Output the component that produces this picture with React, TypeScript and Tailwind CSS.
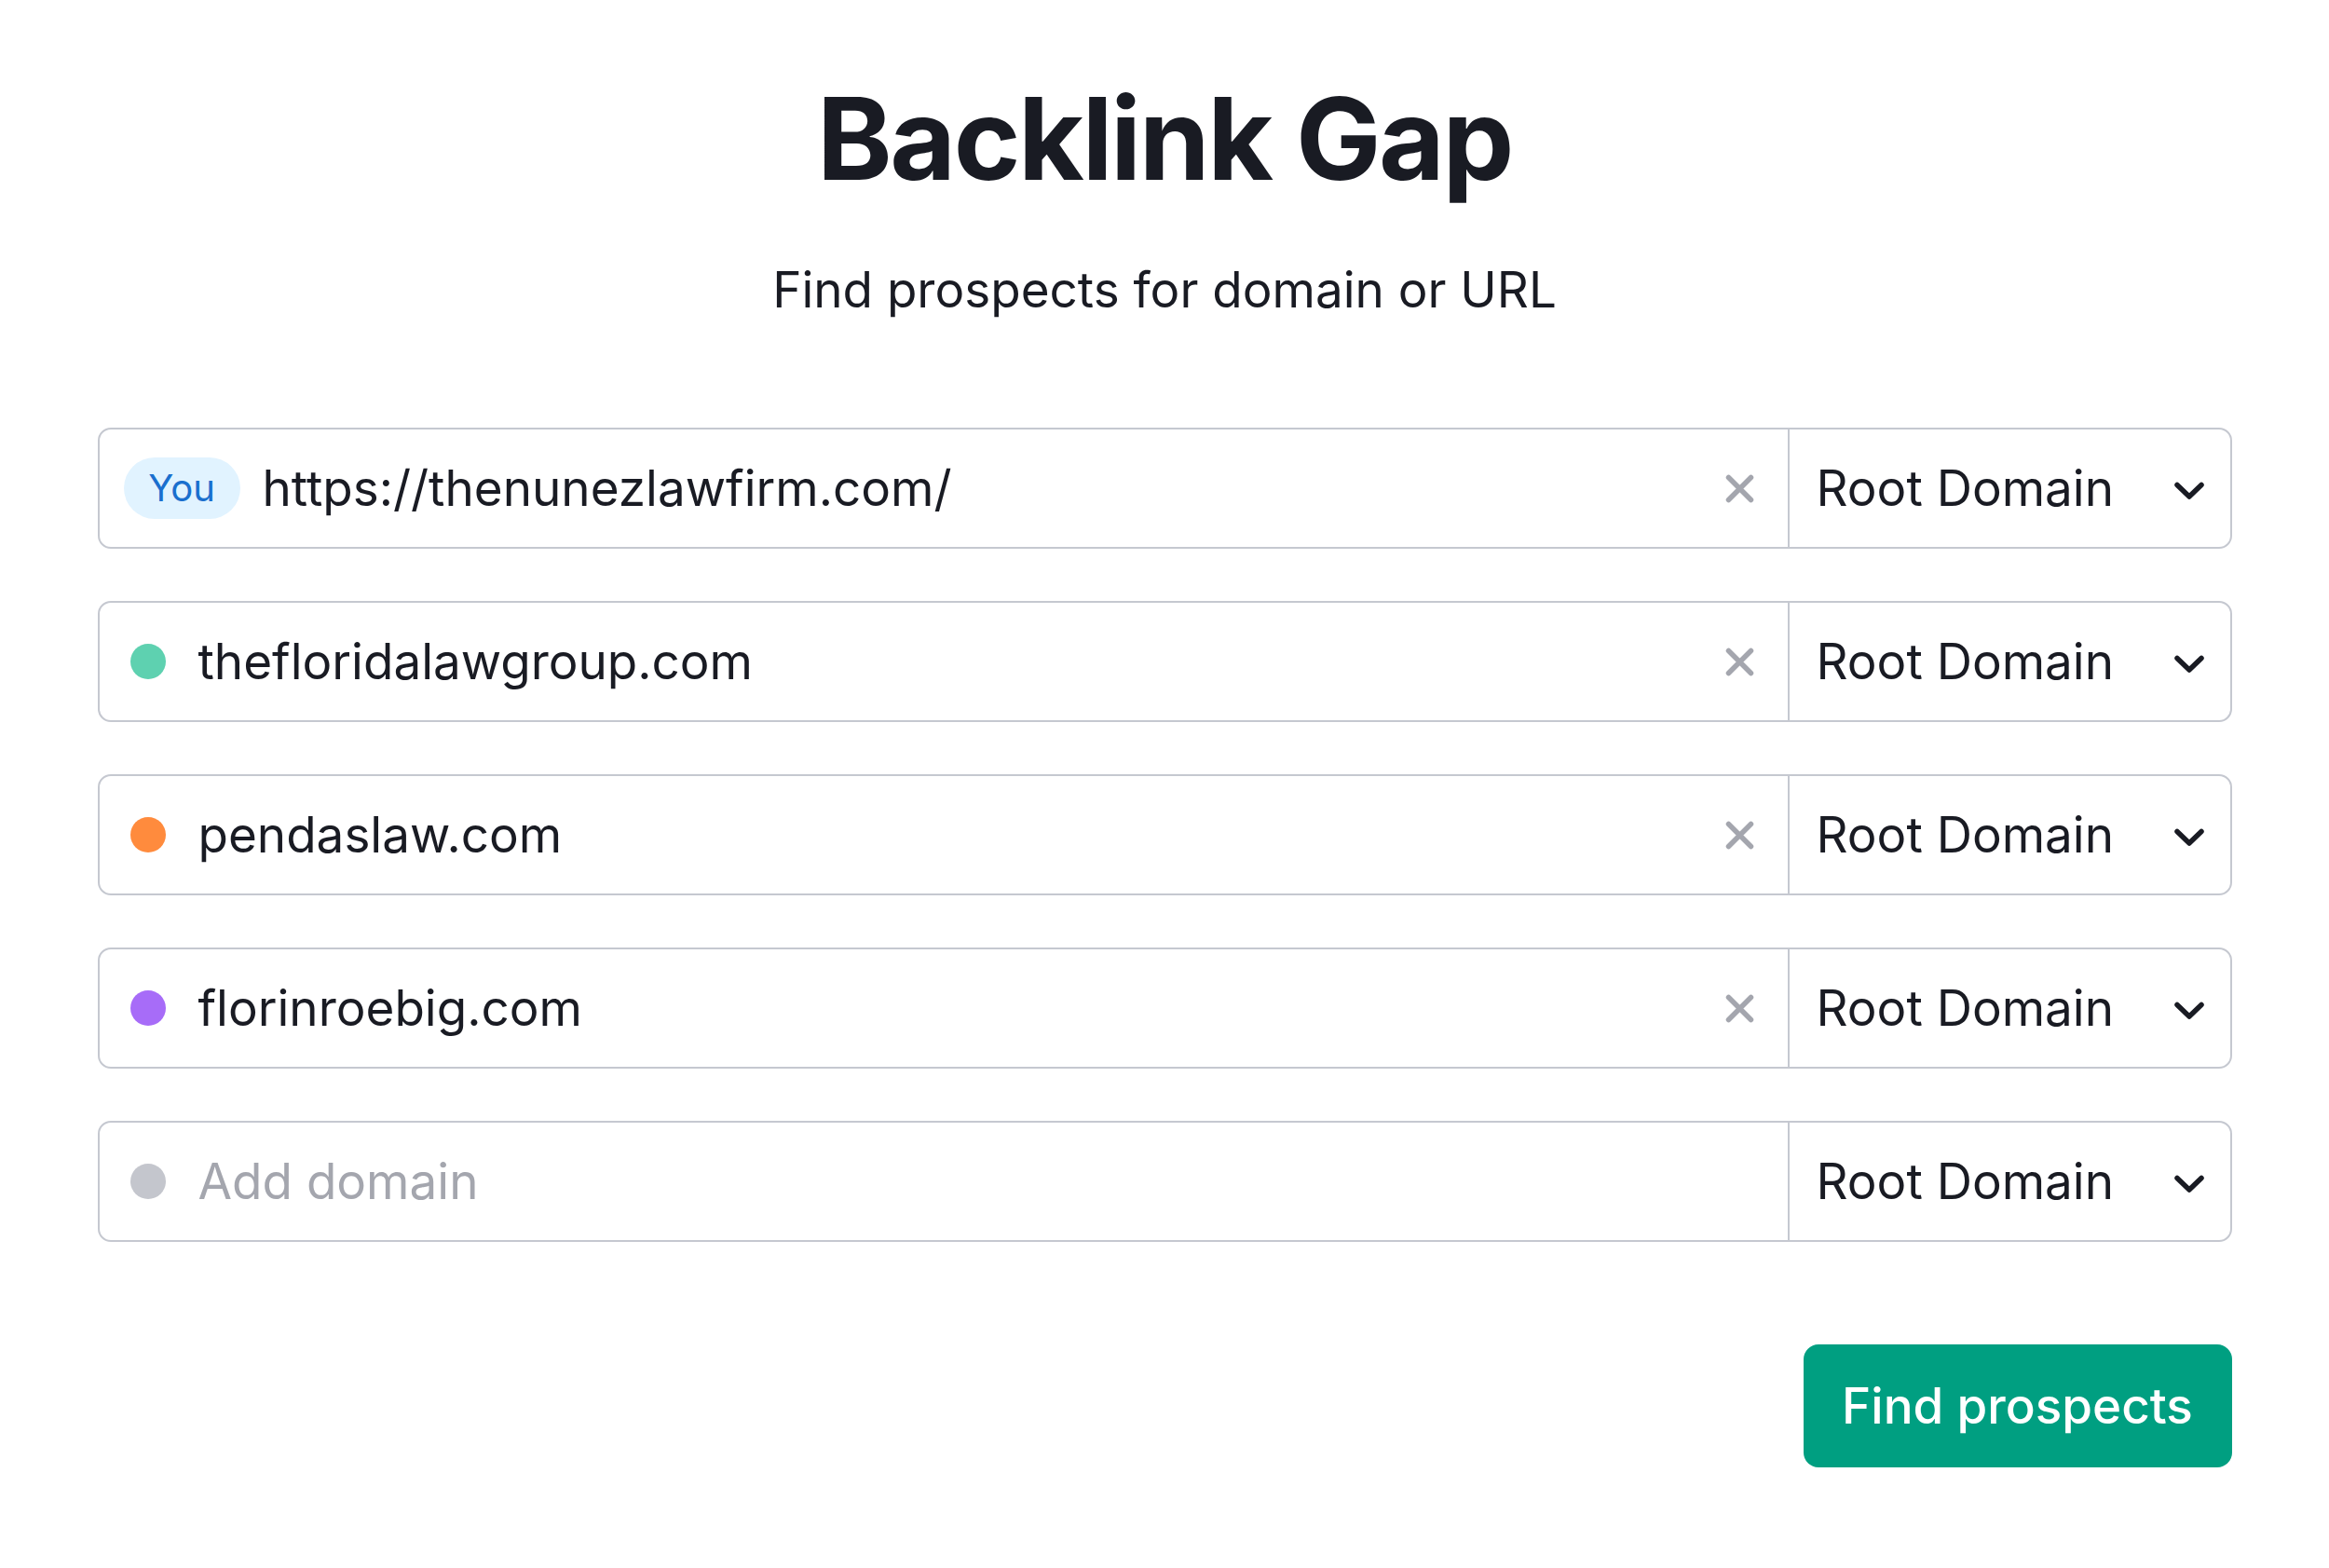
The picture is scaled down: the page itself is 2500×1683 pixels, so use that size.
const rows = [
  { value: "https://thenunezlawfirm.com/", you: true },
  { value: "thefloridalawgroup.com", dot: "bg-[#5ed1b0]" },
  { value: "pendaslaw.com", dot: "bg-[#ff8b3d]" },
  { value: "florinroebig.com", dot: "bg-[#a76cf8]" },
  { value: "", dot: "bg-[#c4c6cd]", placeholder: "Add domain" },
];

function CloseIcon() {
  return (
    <svg width="33" height="33" viewBox="0 0 33 33" fill="none">
      <path d="M4.5 4.5L28.5 28.5M28.5 4.5L4.5 28.5" stroke="#a4a6ae" strokeWidth="5.5" strokeLinecap="round" />
    </svg>
  );
}

function ChevronIcon() {
  return (
    <svg width="34" height="22" viewBox="0 0 34 22" fill="none" className="mt-[5px]">
      <path d="M4 4.5L17 17L30 4.5" stroke="#191b23" strokeWidth="5.5" strokeLinecap="round" strokeLinejoin="round" />
    </svg>
  );
}

type Row = { value: string; you?: boolean; dot?: string; placeholder?: string };

function DomainRow({ row }: { row: Row }) {
  return (
    <div className="flex h-[130px] rounded-[14px] border-2 border-[#c5c8d0] bg-white">
      <div className="flex flex-1 items-center">
        {row.you ? (
          <div className="ml-[26px] mr-[24px] flex h-[66px] w-[125px] items-center justify-center rounded-full bg-[#e1f3ff] text-[40px] leading-none text-[#1a6fce]">
            You
          </div>
        ) : (
          <div className={`ml-[33px] mr-[35px] h-[38px] w-[38px] rounded-full ${row.dot}`} />
        )}
        <span className={`flex-1 text-[53px] leading-none ${row.value ? "text-[#191b23]" : "text-[#a4a6ae]"}`}>
          {row.value || row.placeholder}
        </span>
        {row.value && (
          <div className="mr-[35px]">
            <CloseIcon />
          </div>
        )}
      </div>
      <div className="flex w-[475px] items-center justify-between border-l-2 border-[#c5c8d0] pl-[29px] pr-[27px]">
        <span className="text-[53px] leading-none text-[#191b23]">Root Domain</span>
        <ChevronIcon />
      </div>
    </div>
  );
}

export default function App() {
  return (
    <div className="min-h-screen bg-white font-['Inter',sans-serif]">
      <div className="mx-auto flex w-[2291px] flex-col pt-[88px]">
        <h1 className="text-center text-[122px] font-bold leading-none tracking-[-0.02em] text-[#191b23]">
          Backlink Gap
        </h1>
        <p className="mt-[75px] text-center text-[53px] leading-none text-[#191b23]">
          Find prospects for domain or URL
        </p>
        <div className="mt-[121px] flex flex-col gap-[56px]">
          {rows.map((r, i) => (
            <DomainRow key={i} row={r} />
          ))}
        </div>
        <div className="mt-[110px] flex justify-end">
          <button className="h-[132px] w-[460px] rounded-[16px] bg-[#009f81] text-[53px] font-medium leading-none text-white">
            Find prospects
          </button>
        </div>
      </div>
    </div>
  );
}
